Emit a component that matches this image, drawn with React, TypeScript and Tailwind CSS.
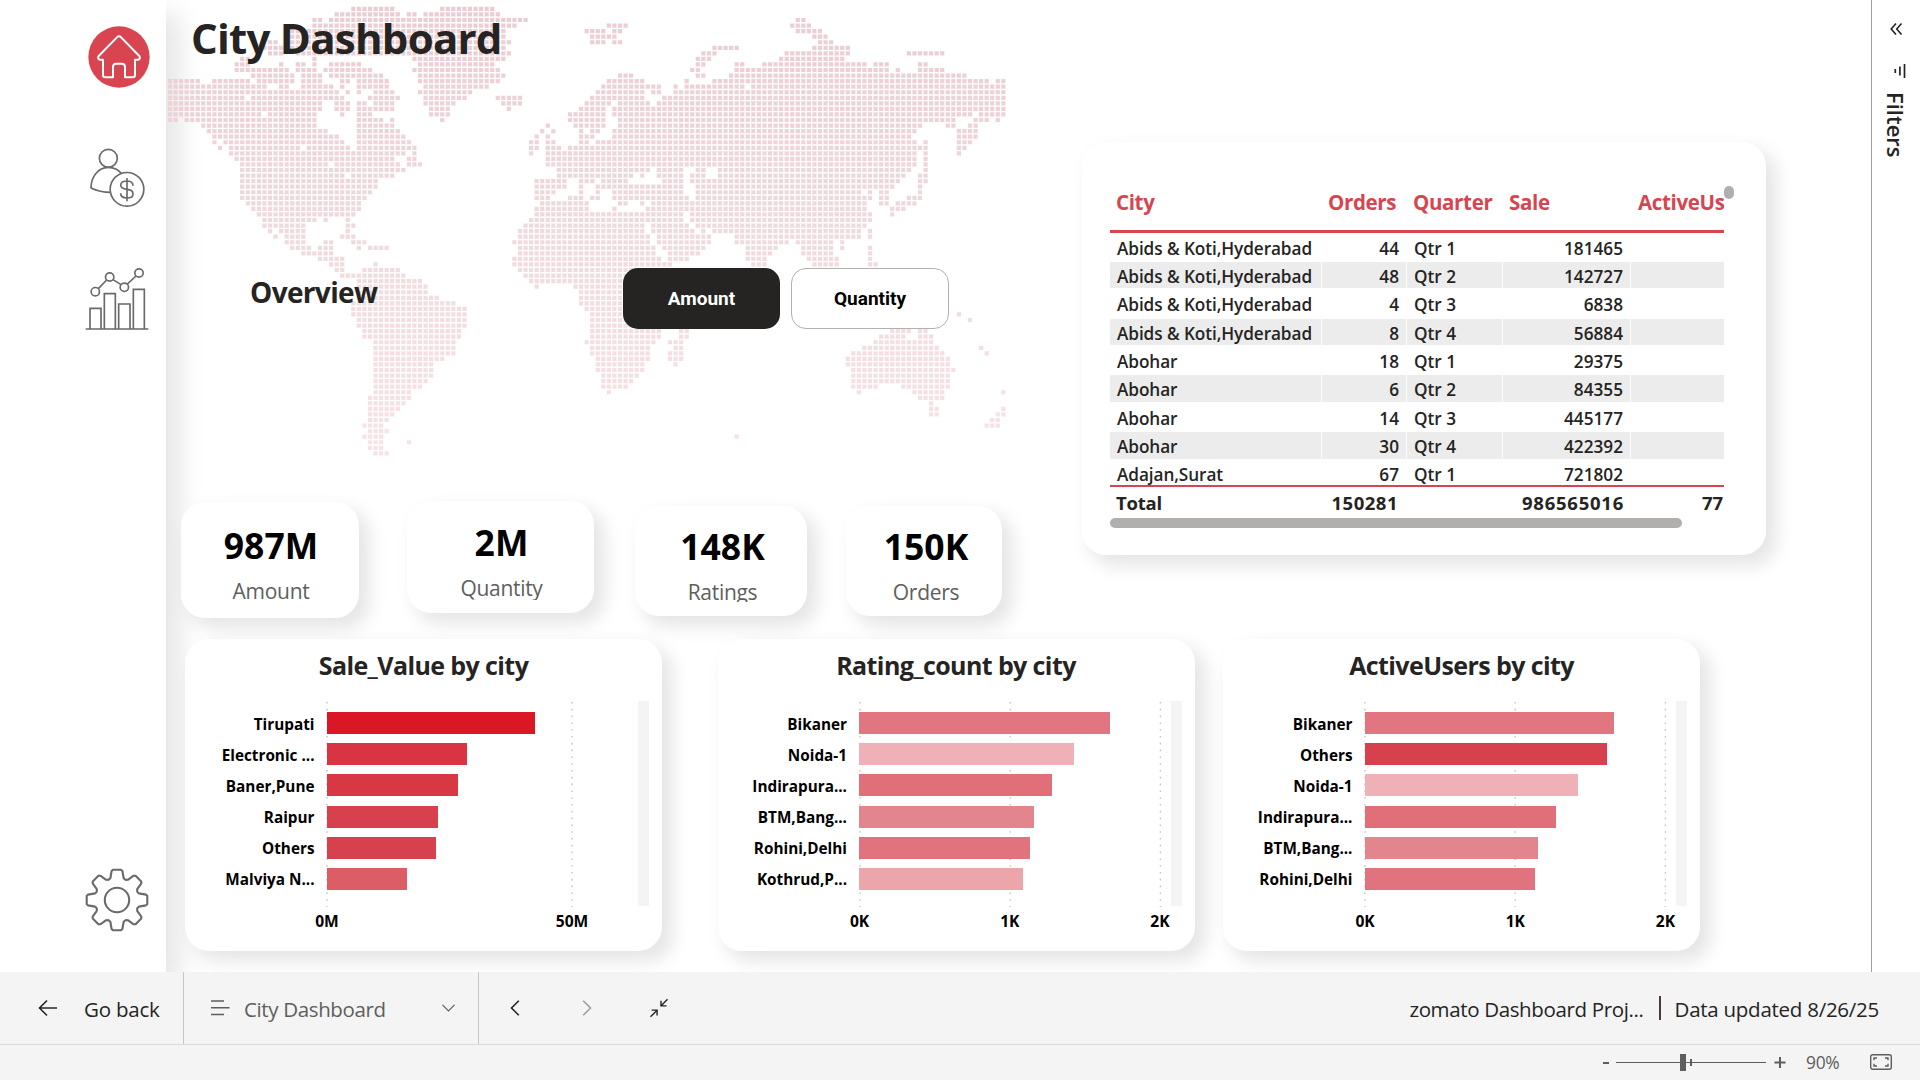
import React from "react";
import clsx from "clsx";

/* Land cells of the dotted world map: one entry per row, each a list of column runs. */
const MAP_ROWS: string[] = [
  "33-40 49-58",
  "30-41 43-44 46-59",
  "26-27 29-64 113-114",
  "26-62 79-82 112-115",
  "21-60 75-78 80-81 113-117",
  "21-60 76-80 116-118",
  "18-19 21-61 76-78 80-81 117-119",
  "16-60 98-102 116-122",
  "18-20 23-61 96-98 111-122 133-139",
  "13-14 26 44-60 95-97 110-121",
  "12-14 20 23-24 26 29-34 45-58 95-96 102-103 107-125 127-129 135-136",
  "12-21 23-25 26 28-36 44-59 94-95 102-129 131 135-139",
  "15-22 24-27 29-38 45-60 95-96 81-83 101-143",
  "0-5 8-14 16-22 24-27 31-32 34-39 45-59 79-85 93 98-147 149-150",
  "0-17 20-21 24-29 31 34-39 46-57 78-88 91 93-103 105-150",
  "0-30 32 34 37-40 45-54 77-85 87-88 91-150",
  "0-13 15-31 36-41 46-53 59-63 76-85 89-150",
  "0-27 30-32 34-35 37-40 46-51 60-63 75-79 81-86 88-150",
  "0-27 30-32 34-40 47-50 61 74-78 80-150",
  "0-16 18-26 31 34-36 47-50 72-78 80-144 146-148 149-150",
  "0-1 3-26 34-38 40 49 72-78 81-139 140-141 145-147 149",
  "6-26 34-40 68 73-78 81-135 140-141 144-145",
  "7-28 34-41 67 69 74 76-77 80-134 142-145",
  "8-30 34-42 66 68 74-76 80-133 142-145",
  "8 10-31 34-43 65 66 68-69 74-75 77-134 136 142-144",
  "9 11-23 25-32 34-44 65 66 68-70 72-135 136 142-143",
  "11-42 44 65 68-134 136 142",
  "12-40 43-44 68-134 136",
  "13-28 30-41 43-45 68-134 136",
  "13-42 70-86 88-92 95-96 99-133 136",
  "13-31 33-40 70-79 80-83 85 88-92 94-96 99-132 135-136",
  "13-37 66-71 74 75-76 78 79-82 89-92 94-131 135-136",
  "13-37 66-71 74 77-79 80-92 95-130 135",
  "13-36 66-69 74 77 80-92 95-124 126 128-129 135",
  "13-35 66-68 72-74 76-77 80-93 95-125 126 128-129 133-135",
  "14-34 67-75 81-82 85 87-125 128-129 131-134",
  "15-34 66-75 80 86-125 130-132",
  "16-33 66-92 94-126 130",
  "17-26 28 32 65-92 94-126",
  "17-24 32-33 64-85 87-93 95-125",
  "18 20-24 32 63-85 87-94 96 98-124 126",
  "19 21-24 31-33 63-86 88-97 102-124 126",
  "21-24 28-29 33-35 62-86 88-97 102-111 113-119 121",
  "22-25 27-29 34 36-39 63-87 89-96 104-109 114-119 121 126",
  "24-29 63-87 90-95 104-108 114-119 126",
  "27-31 62-88 90-93 104-107 115-120 126",
  "29-31 37 62-90 105-107 116-120 126-127",
  "30-31 35-41 63-90",
  "31-42 64-90",
  "34-45 65-90",
  "34-46 66 73-90",
  "34-46 74-90",
  "34-48 74-90",
  "33-51 74-90",
  "33-53 75-90",
  "33-53 76-90 142",
  "34-53 76-90 144",
  "34-53 76-90",
  "35-52 76-88 92-93 130-133 135-136",
  "35-52 76-88 92-93 128-132 135-137",
  "37-51 75 76-87 90-92 127-137",
  "37-51 76-86 91-92 125-138 146",
  "37-51 76-86 90-92 123-139 147",
  "37-49 77-86 90-92 122-140",
  "37-47 77-85 91 122-140",
  "37-47 77-85 123-141",
  "37-47 78-84 123-140",
  "37-46 78-83 123-140",
  "37-45 78-82 123-127 132-140",
  "37-43 79 124 134-139 150",
  "36-43 135-139",
  "36-42 137",
  "36-41 137-138 150",
  "36-40 137-138 149-150",
  "36-39 148-149",
  "35-38 147-149",
  "36-39",
  "35-38 102",
  "36-38 43",
  "36-38",
  "37-39",
];

const PITCH = 5.5556;
const MAP_PATH = MAP_ROWS.map((row, r) =>
  row
    .split(" ")
    .map((run) => {
      const [a, b] = run.split("-").map(Number);
      let d = "";
      for (let c = a; c <= (b ?? a); c++) {
        d += `M${(1.9 + c * PITCH).toFixed(2)} ${(6.8 + r * PITCH).toFixed(2)}h4.2v4.2h-4.2z`;
      }
      return d;
    })
    .join("")
).join("");

function WorldMap() {
  return (
    <svg className="absolute left-0 top-0" width="860" height="480" aria-hidden="true">
      <defs>
        <linearGradient id="mapTint" x1="0" y1="0" x2="0" y2="1">
          <stop offset="0" stopColor="#ebccd3" />
          <stop offset="0.5" stopColor="#efdadd" />
          <stop offset="1" stopColor="#f9e2e6" />
        </linearGradient>
      </defs>
      <path d={MAP_PATH} fill="url(#mapTint)" />
    </svg>
  );
}

/* ---------- Sidebar ---------- */

function HomeIcon() {
  return (
    <svg width="62" height="62" viewBox="85 78 186 186" fill="none">
      <circle cx="178" cy="171" r="92" fill="#d84450" />
      <path
        d="M174 110Q178 107 182 110L239 168Q244 177 235 179H226V225Q226 232 219 232H196V201Q196 191 186 191H170Q160 191 160 201V232H137Q130 232 130 225V179H121Q112 177 117 168Z"
        stroke="#fff"
        strokeWidth="6"
        strokeLinejoin="round"
      />
    </svg>
  );
}

function CustomerIcon() {
  return (
    <svg width="57" height="60" viewBox="86 444 171 180" fill="none" stroke="#6a6a6a" strokeWidth="5">
      <circle cx="144" cy="475" r="27" />
      <path d="M184 521C173 507 158 502 144 502C112 502 92 532 92 564C108 572 130 577 152 577" strokeLinejoin="round" />
      <circle cx="200" cy="568" r="50.5" />
      <path d="M218 557C218 547 210 543 200 543C189 543 181 548 181 556C181 564 189 567 200 568C211 569 218 573 218 581C218 590 211 594 200 594C189 594 181 589 181 580M200 534V604" />
    </svg>
  );
}

function TrendIcon() {
  return (
    <svg width="64" height="64" viewBox="74 802 192 192" fill="none" stroke="#6a6a6a" strokeWidth="5">
      <path d="M76 988H264M89 987V926H122V987M132 987V882H165V987M175 987V913H209V987M219 987V869H252V987" />
      <circle cx="105" cy="876" r="12.5" />
      <circle cx="148" cy="832" r="12.5" />
      <circle cx="192" cy="863" r="12.5" />
      <circle cx="236" cy="820" r="12.5" />
      <path d="M114 867L139 841M158 840L182 855M200 854L227 829" />
    </svg>
  );
}

const GEAR_POINTS = Array.from({ length: 8 }, (_, i) => {
  const a = (i * Math.PI) / 4;
  return [
    [-8, -20.5],
    [-6.6, -22],
    [-5.4, -29],
    [-4, -30.3],
    [4, -30.3],
    [5.4, -29],
    [6.6, -22],
    [8, -20.5],
  ]
    .map(([x, y]) => `${(x * Math.cos(a) - y * Math.sin(a)).toFixed(2)},${(x * Math.sin(a) + y * Math.cos(a)).toFixed(2)}`)
    .join(" ");
}).join(" ");

function GearIcon() {
  return (
    <svg width="64" height="64" viewBox="-32 -32 64 64" fill="none" stroke="#6a6a6a" strokeWidth="2.1" strokeLinejoin="round">
      <polygon points={GEAR_POINTS} />
      <circle r="12.2" />
    </svg>
  );
}

function Sidebar() {
  return (
    <nav className="flex w-[166px] shrink-0 flex-col items-start bg-white pl-[85px] shadow-[14px_14px_24px_rgba(0,0,0,0.1)]">
      <button className="ml-[3px] mt-[26px]"><HomeIcon /></button>
      <button className="ml-[4px] mt-[60px]"><CustomerIcon /></button>
      <button className="mt-[59px]"><TrendIcon /></button>
      <button className="mb-[40px] mt-auto"><GearIcon /></button>
    </nav>
  );
}

/* ---------- KPI cards ---------- */

const CARD = "rounded-3xl bg-white shadow-[9px_9px_18px_2px_rgba(0,0,0,0.1)]";

const KPIS = [
  { value: "987M", label: "Amount", box: "mt-px ml-[15px] w-[178px] h-[116px] pt-[21px] pl-0.5", clip: "h-7" },
  { value: "2M", label: "Quantity", box: "ml-[48px] w-[187px] h-[112px] pt-[19px] pl-0.5", clip: "h-[26px]" },
  { value: "148K", label: "Ratings", box: "mt-[5px] ml-[41px] w-[172px] h-[110px] pt-[18px] pl-[3px]", clip: "h-6" },
  { value: "150K", label: "Orders", box: "mt-[5px] ml-[39px] w-[156px] h-[110px] pt-[18px] pl-1", clip: "h-7" },
];

function Kpis() {
  return (
    <div className="mt-[172px] flex items-start">
      {KPIS.map((k) => (
        <div key={k.label} className={clsx(CARD, "shrink-0 text-center", k.box)}>
          <div className="text-[35.5px] font-bold leading-[44px] text-black">{k.value}</div>
          <div className={clsx("mt-[10px] overflow-hidden text-[21px] leading-7 tracking-[-0.3px] text-[#605e5c]", k.clip)}>
            {k.label}
          </div>
        </div>
      ))}
    </div>
  );
}

/* ---------- Table ---------- */

const COLS = "grid w-[640px] grid-cols-[212px_85px_96px_128px_119px]";

const ROWS = [
  ["Abids & Koti,Hyderabad", "44", "Qtr 1", "181465"],
  ["Abids & Koti,Hyderabad", "48", "Qtr 2", "142727"],
  ["Abids & Koti,Hyderabad", "4", "Qtr 3", "6838"],
  ["Abids & Koti,Hyderabad", "8", "Qtr 4", "56884"],
  ["Abohar", "18", "Qtr 1", "29375"],
  ["Abohar", "6", "Qtr 2", "84355"],
  ["Abohar", "14", "Qtr 3", "445177"],
  ["Abohar", "30", "Qtr 4", "422392"],
  ["Adajan,Surat", "67", "Qtr 1", "721802"],
];

function CityTable() {
  return (
    <div className={clsx(CARD, "ml-[80px] mt-[142px] flex h-[413px] w-[684px] shrink-0 pl-7")}>
      <div className="w-[614px] overflow-hidden">
        <div className={clsx(COLS, "mt-[49px] h-[39px] text-[20.5px] font-bold leading-[22px] tracking-[-0.35px] text-[#d64550]")}>
          <span className="pl-[6px]">City</span>
          <span className="pl-[6px]">Orders</span>
          <span className="pl-[6px]">Quarter</span>
          <span className="pl-[6px]">Sale</span>
          <span className="pl-[7px]">ActiveUsers</span>
        </div>
        <div className="h-[2.5px] bg-[#d64550]" />
        <div className="mt-px h-[251.5px] overflow-hidden text-[17.2px] font-semibold text-[#252423]">
          {ROWS.map((row, i) => (
            <div key={i} className={clsx(COLS, "h-[28.36px]")}>
              {[...row, ""].map((cell, j) => (
                <div
                  key={j}
                  className={clsx(
                    "mr-px h-[26.5px] px-[7px] pt-px leading-[27px]",
                    i % 2 === 1 && "bg-[#ececec]",
                    (j === 1 || j === 3) && "text-right",
                    j === 0 && "tracking-[-0.08px]"
                  )}
                >
                  {cell}
                </div>
              ))}
            </div>
          ))}
        </div>
        <div className="h-[2px] bg-[#d64550]" />
        <div className={clsx(COLS, "h-[31px] text-[18.5px] font-bold leading-[31px] text-[#252423]")}>
          <span className="pl-[6px] tracking-[-0.2px]">Total</span>
          <span className="pr-[9px] text-right tracking-[0.5px]">150281</span>
          <span />
          <span className="pr-[7px] text-right tracking-[0.75px]">986565016</span>
          <span className="pl-[71px]">77123</span>
        </div>
        <div className="h-2.5 w-[572px] rounded-full bg-[#b0afae]" />
      </div>
      <div className="mt-[44px] h-[13px] w-2.5 rounded-full bg-[#b0afae]" />
    </div>
  );
}

/* ---------- Bar charts ---------- */

type Chart = {
  title: string;
  tick: number;
  ticks: string[];
  bars: [string, number, string][];
};

const CHARTS: Chart[] = [
  {
    title: "Sale_Value by city",
    tick: 245,
    ticks: ["0M", "50M"],
    bars: [
      ["Tirupati", 208, "#da1725"],
      ["Electronic ...", 140, "#d83441"],
      ["Baner,Pune", 131, "#d83843"],
      ["Raipur", 111, "#d6414d"],
      ["Others", 109, "#d6414d"],
      ["Malviya N...", 80.5, "#dc5d66"],
    ],
  },
  {
    title: "Rating_count by city",
    tick: 150.2,
    ticks: ["0K", "1K", "2K"],
    bars: [
      ["Bikaner", 250.5, "#e17580"],
      ["Noida-1", 214.5, "#efb1b7"],
      ["Indirapura...", 192.5, "#e06f79"],
      ["BTM,Bang...", 174.5, "#e3858d"],
      ["Rohini,Delhi", 171, "#e0737d"],
      ["Kothrud,P...", 163.5, "#eba5ab"],
    ],
  },
  {
    title: "ActiveUsers by city",
    tick: 150.2,
    ticks: ["0K", "1K", "2K"],
    bars: [
      ["Bikaner", 249, "#e17580"],
      ["Others", 242, "#d6414d"],
      ["Noida-1", 213, "#efb1b7"],
      ["Indirapura...", 191, "#e06f79"],
      ["BTM,Bang...", 173, "#e3858d"],
      ["Rohini,Delhi", 170, "#e0737d"],
    ],
  },
];

function BarChart({ chart, className }: { chart: Chart; className: string }) {
  return (
    <div className={clsx(CARD, "h-[312px] w-[477px] shrink-0 pt-[9px]", className)}>
      <h2 className="text-center text-[25px] font-bold leading-[34px] tracking-[-0.6px] text-[#252423]">{chart.title}</h2>
      <div className="mt-[19px] flex h-[206px]">
        <div className="relative w-[453px] pt-[11px]">
          <svg className="absolute left-[142px] top-0 overflow-visible" width="310" height="206">
            {chart.ticks.map((t, i) => (
              <line
                key={t}
                x1={i * chart.tick}
                x2={i * chart.tick}
                y1="1"
                y2="206"
                stroke="#c4c4c4"
                strokeWidth="1.4"
                strokeDasharray="1.6 5.2"
              />
            ))}
          </svg>
          <div className="relative">
            {chart.bars.map(([label, width, color]) => (
              <div key={label} className="flex h-[31.2px] items-start">
                <div className="w-[129.5px] pt-[0.5px] text-right text-[15.3px] font-bold leading-[22px] text-black">{label}</div>
                <div className="ml-[12px] h-[22px]" style={{ width, backgroundColor: color }} />
              </div>
            ))}
          </div>
        </div>
        <div className="h-[205px] w-[11px] bg-[#f4f4f4]" />
      </div>
      <div className={clsx("mt-[3px] flex", chart.ticks.length === 2 ? "ml-[19.5px]" : "ml-[67px]")}>
        {chart.ticks.map((t) => (
          <span key={t} className="shrink-0 text-center text-[15.6px] font-bold leading-[22px] text-black" style={{ width: chart.tick }}>
            {t}
          </span>
        ))}
      </div>
    </div>
  );
}

/* ---------- Filters pane ---------- */

function FiltersPane() {
  return (
    <aside className="flex w-[49px] shrink-0 flex-col border-l border-[#a19f9d] bg-white pl-[19px] text-[#252423]">
      <svg className="ml-[-1px] mt-[22px]" width="14" height="14" viewBox="0 0 14 14" fill="none" stroke="currentColor" strokeWidth="1.6">
        <path d="M6 1.500L1.200 7L6 12.500M11.500 1.500L6.700 7L11.500 12.500" />
      </svg>
      <svg className="ml-[3px] mt-[28px]" width="14" height="14" viewBox="0 0 14 14" fill="none" stroke="currentColor" strokeWidth="1.7">
        <path d="M10.500 0V14M5.900 2.500V11.500M1.300 5V9" />
      </svg>
      <div className="ml-[-9px] mt-[14px] w-7 text-[22px] font-semibold leading-7 [writing-mode:vertical-rl]">Filters</div>
    </aside>
  );
}

/* ---------- Bottom bars ---------- */

function NavigationBar() {
  return (
    <footer className="flex h-[72px] items-stretch bg-[#f4f4f4] text-[20.5px] leading-[72px] tracking-[-0.36px] text-[#252423]">
      <button className="flex w-[184px] items-center border-r border-[#c8c6c4] pl-[38px]">
        <svg width="20" height="18" viewBox="0 0 20 18" fill="none" stroke="currentColor" strokeWidth="1.6">
          <path d="M19 9H1.500M9 1.500L1.500 9L9 16.500" />
        </svg>
        <span className="ml-[26px] mt-[1px] tracking-[-0.2px]">Go back</span>
      </button>
      <button className="flex w-[295px] items-center border-r border-[#c8c6c4] pl-[27px] text-[#605e5c]">
        <svg width="19" height="16" viewBox="0 0 19 16" fill="none" stroke="currentColor" strokeWidth="1.5">
          <path d="M0 1H13M0 7.700H18.500M0 14.400H13" />
        </svg>
        <span className="ml-[14px] mt-[1px]">City Dashboard</span>
        <svg className="ml-auto mr-[23px]" width="13" height="8" viewBox="0 0 13 8" fill="none" stroke="currentColor" strokeWidth="1.2">
          <path d="M0.500 0.800L6.500 6.800L12.500 0.800" />
        </svg>
      </button>
      <div className="flex items-center pl-[31px]">
        <svg width="10" height="16" viewBox="0 0 10 16" fill="none" stroke="currentColor" strokeWidth="1.6">
          <path d="M8.800 0.800L1.500 8L8.800 15.200" />
        </svg>
        <svg className="ml-[62px]" width="10" height="16" viewBox="0 0 10 16" fill="none" stroke="#a19f9d" strokeWidth="1.6">
          <path d="M1.200 0.800L8.500 8L1.200 15.200" />
        </svg>
        <svg className="ml-[57px]" width="20" height="20" viewBox="0 0 20 20" fill="none" stroke="currentColor" strokeWidth="1.4">
          <path d="M18.500 1.300L12.200 7.700M12 2.800V7.900H17.500M1.500 18.700L7.900 12.400M2.600 12.100H8.100V17.500" />
        </svg>
      </div>
      <div className="ml-auto flex items-center pr-[41px]">
        <span className="mt-[1px]">zomato Dashboard Proj...</span>
        <span className="ml-[15px] h-6 w-[2px] bg-[#4a3a3a]" />
        <span className="ml-[14px] mt-[1px] tracking-[-0.26px]">Data updated 8/26/25</span>
      </div>
    </footer>
  );
}

function StatusBar() {
  return (
    <div className="flex h-9 items-center justify-end border-t border-[#dcdcdc] bg-[#f4f4f4] text-[#605e5c]">
      <svg className="mb-px" width="186" height="18" viewBox="1602 1053 186 18" fill="none" stroke="currentColor">
        <path d="M1603 1063H1609" strokeWidth="2" />
        <path d="M1616 1062.500H1766" strokeWidth="1" />
        <path d="M1683 1054V1071" strokeWidth="6" />
        <path d="M1691 1059V1066" strokeWidth="2" />
        <path d="M1774.500 1062.500H1785.500M1780 1057V1068" strokeWidth="2" />
      </svg>
      <span className="mb-0.5 ml-[18px] w-[64px] text-[17.4px] leading-[34px] tracking-[-0.3px]">90%</span>
      <svg className="mb-px mr-[28px]" width="22" height="16" viewBox="0 0 22 16" fill="none" stroke="currentColor" strokeWidth="1.4">
        <rect x="0.700" y="0.700" width="20.600" height="14.600" rx="2" />
        <path d="M4 6.300V4H7M15 4H18V6.300M18 9.700V12H15M7 12H4V9.700" />
      </svg>
    </div>
  );
}

export default function App() {
  return (
    <div className="flex h-[1080px] w-[1920px] flex-col overflow-hidden bg-white font-['Open_Sans','Noto_Sans',sans-serif]">
      <div className="flex h-[972px] overflow-hidden">
        <Sidebar />
        <main className="relative flex-1">
          <WorldMap />
          <div className="relative">
            <section className="flex h-[639px] items-start">
              <div className="w-[836px] shrink-0">
                <h1 className="ml-[25px] mt-[10px] text-[42px] font-bold leading-[56px] tracking-[-0.75px] text-[#252423]">City Dashboard</h1>
                <div className="mt-[202px] flex h-[61px] items-start">
                  <h2 className="ml-[84px] mt-[5px] w-[373px] text-[28px] font-bold leading-[38px] tracking-[-0.65px] text-[#252423]">Overview</h2>
                  <div className="flex gap-[11px] font-['Roboto',sans-serif] text-[19px] font-bold leading-[60px]">
                    <button className="h-[61px] w-[157px] shrink-0 rounded-[15px] bg-[#252423] text-white">Amount</button>
                    <button className="h-[61px] w-[158px] shrink-0 rounded-[15px] border border-[#b3b0ad] bg-white text-black">Quantity</button>
                  </div>
                </div>
                <Kpis />
              </div>
              <CityTable />
            </section>
            <section className="flex">
              <BarChart chart={CHARTS[0]} className="ml-[19px]" />
              <BarChart chart={CHARTS[1]} className="ml-[55.5px]" />
              <BarChart chart={CHARTS[2]} className="ml-[28.5px]" />
            </section>
          </div>
        </main>
        <FiltersPane />
      </div>
      <NavigationBar />
      <StatusBar />
    </div>
  );
}
